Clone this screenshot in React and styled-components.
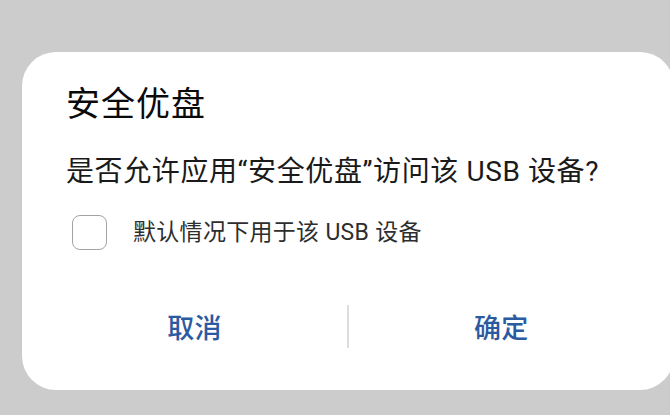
import React, { useState } from "react";
import styled, { createGlobalStyle } from "styled-components";

const GlobalStyle = createGlobalStyle`
  html, body {
    margin: 0;
    padding: 0;
    background: #cccccc;
    overflow: hidden;
  }
  body {
    font-family: Roboto, "Noto Sans CJK SC", sans-serif;
  }
  #root {
    width: 670px;
    height: 415px;
    overflow: hidden;
  }
`;

const Screen = styled.div`
  width: 670px;
  height: 415px;
  padding: 52px 0 0 22px;
  box-sizing: border-box;
  overflow: hidden;
`;

const Dialog = styled.div`
  width: 652px;
  height: 338px;
  box-sizing: border-box;
  background: #ffffff;
  border-radius: 34px;
  padding: 32px 0 0 0;
  display: flex;
  flex-direction: column;
`;

const Title = styled.div`
  padding-left: 44px;
  font-size: 34px;
  line-height: 40px;
  font-weight: 400;
  letter-spacing: 1px;
  color: #0a0a0a;
`;

const Message = styled.div`
  margin-top: 30px;
  padding-left: 44px;
  font-size: 28px;
  line-height: 36px;
  letter-spacing: 0.6px;
  color: #1a1a1a;
`;

const OptionRow = styled.label`
  margin-top: 25px;
  padding-left: 50px;
  display: flex;
  align-items: center;
  gap: 26px;
  height: 35px;
  cursor: pointer;
`;

const Box = styled.span`
  width: 35px;
  height: 35px;
  box-sizing: border-box;
  border: 1.5px solid ${(p) => (p.$checked ? "#2c5aa0" : "#a3a3a3")};
  background: ${(p) => (p.$checked ? "#2c5aa0" : "#ffffff")};
  border-radius: 8px;
  flex: none;
`;

const OptionText = styled.span`
  font-size: 23px;
  line-height: 30px;
  letter-spacing: 0.3px;
  color: #2e2e2e;
`;

const Actions = styled.div`
  margin-top: 48px;
  padding: 0 20px;
  height: 56px;
  display: flex;
  align-items: center;
`;

const ActionButton = styled.button`
  flex: 1;
  height: 100%;
  border: none;
  background: transparent;
  font-family: Roboto, "Noto Sans CJK SC", sans-serif;
  font-size: 27px;
  font-weight: 500;
  letter-spacing: 0.5px;
  color: #2c5aa0;
  padding: 0;
  cursor: pointer;
`;

const Divider = styled.span`
  width: 1.5px;
  height: 43px;
  background: #dddddd;
  flex: none;
`;

export default function App() {
  const [checked, setChecked] = useState(false);
  return (
    <>
      <GlobalStyle />
      <Screen>
        <Dialog>
          <Title>安全优盘</Title>
          <Message>是否允许应用“安全优盘”访问该 USB 设备?</Message>
          <OptionRow onClick={() => setChecked((c) => !c)}>
            <Box $checked={checked} />
            <OptionText>默认情况下用于该 USB 设备</OptionText>
          </OptionRow>
          <Actions>
            <ActionButton>取消</ActionButton>
            <Divider />
            <ActionButton>确定</ActionButton>
          </Actions>
        </Dialog>
      </Screen>
    </>
  );
}
